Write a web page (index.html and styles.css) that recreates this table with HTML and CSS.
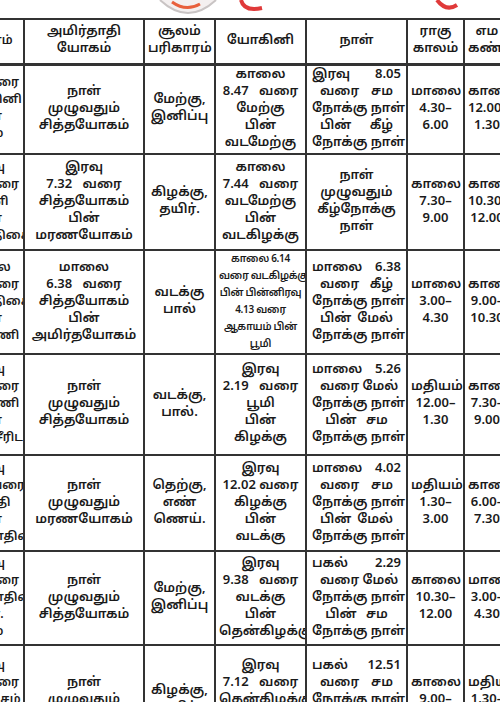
FILE: index.html
```html
<!DOCTYPE html>
<html lang="ta">
<head>
<meta charset="utf-8">
<title>பஞ்சாங்கம்</title>
<link rel="stylesheet" href="styles.css">
</head>
<body>
<div class="page">
  <svg class="deco" width="500" height="18" viewBox="0 0 500 18">
    <path d="M160 0 Q 188 26 216 0" fill="#f4f0f0" stroke="#c9c4c4" stroke-width="2"/>
    <path d="M172 2 Q 186 12 200 4" fill="none" stroke="#e8603c" stroke-width="3"/>
    <path d="M241 0 Q 244 12 262 8" fill="none" stroke="#e03a3a" stroke-width="4"/>
    <path d="M437 0 Q 446 12 457 5" fill="none" stroke="#e03a3a" stroke-width="4"/>
  </svg>
  <table class="tbl">
    <colgroup>
      <col class="w0"><col class="w1"><col class="w2"><col class="w3"><col class="w4"><col class="w5"><col class="w6">
    </colgroup>
    <thead>
      <tr class="rh">
        <th class="lc">கரணம்</th>
        <th><span class="l">அமிர்தாதி</span><span class="l">யோகம்</span></th>
        <th><span class="l">சூலம்</span><span class="l">பரிகாரம்</span></th>
        <th>யோகினி</th>
        <th>நாள்</th>
        <th><span class="l">ராகு</span><span class="l">காலம்</span></th>
        <th><span class="l">எம</span><span class="l">கண்டம்</span></th>
      </tr>
    </thead>
    <tbody>
      <tr class="r1">
        <td class="lc"><span class="l">8.05 வரை</span><span class="l">அஸ்வினி</span><span class="l">பின்</span><span class="l">பூசம்</span></td>
        <td class="loose"><span class="l">நாள்</span><span class="l">முழுவதும்</span><span class="l">சித்தயோகம்</span></td>
        <td class="sul"><span class="l">மேற்கு,</span><span class="l">இனிப்பு</span></td>
        <td><span class="l">காலை</span><span class="l sp">8.47 வரை</span><span class="l">மேற்கு</span><span class="l">பின்</span><span class="l">வடமேற்கு</span></td>
        <td class="j"><span class="l">இரவு 8.05</span><span class="l n">வரை சம</span><span class="l">நோக்கு நாள்</span><span class="l n">பின் கீழ்</span><span class="l">நோக்கு நாள்</span></td>
        <td><span class="l">மாலை</span><span class="l">4.30–</span><span class="l">6.00</span></td>
        <td><span class="l">காலை</span><span class="l">12.00–</span><span class="l">1.30</span></td>
      </tr>
      <tr class="r2">
        <td class="lc"><span class="l">இரவு</span><span class="l">7.32 வரை</span><span class="l">பரணி</span><span class="l">பின்</span><span class="l">கார்த்திகை</span></td>
        <td><span class="l">இரவு</span><span class="l sp">7.32 வரை</span><span class="l">சித்தயோகம்</span><span class="l">பின்</span><span class="l">மரணயோகம்</span></td>
        <td class="sul"><span class="l">கிழக்கு,</span><span class="l">தயிர்.</span></td>
        <td><span class="l">காலை</span><span class="l sp">7.44 வரை</span><span class="l">வடமேற்கு</span><span class="l">பின்</span><span class="l">வடகிழக்கு</span></td>
        <td><span class="l">நாள்</span><span class="l">முழுவதும்</span><span class="l">கீழ்நோக்கு</span><span class="l">நாள்</span></td>
        <td><span class="l">காலை</span><span class="l">7.30–</span><span class="l">9.00</span></td>
        <td><span class="l">காலை</span><span class="l">10.30–</span><span class="l">12.00</span></td>
      </tr>
      <tr class="r3">
        <td class="lc"><span class="l">மாலை</span><span class="l">6.38 வரை</span><span class="l">கார்த்திகை</span><span class="l">பின்</span><span class="l">ரோகிணி</span></td>
        <td><span class="l">மாலை</span><span class="l sp">6.38 வரை</span><span class="l">சித்தயோகம்</span><span class="l">பின்</span><span class="l">அமிர்தயோகம்</span></td>
        <td class="sul"><span class="l">வடக்கு</span><span class="l">பால்</span></td>
        <td class="small"><span class="l">காலை 6.14</span><span class="l">வரை வடகிழக்கு</span><span class="l">பின் பின்னிரவு</span><span class="l">4.13 வரை</span><span class="l">ஆகாயம் பின்</span><span class="l">பூமி</span></td>
        <td class="j"><span class="l">மாலை 6.38</span><span class="l n">வரை கீழ்</span><span class="l">நோக்கு நாள்</span><span class="l n">பின் மேல்</span><span class="l">நோக்கு நாள்</span></td>
        <td><span class="l">மாலை</span><span class="l">3.00–</span><span class="l">4.30</span></td>
        <td><span class="l">காலை</span><span class="l">9.00–</span><span class="l">10.30</span></td>
      </tr>
      <tr class="r4">
        <td class="lc"><span class="l">இரவு</span><span class="l">2.19 வரை</span><span class="l">ரோகிணி</span><span class="l">பின்</span><span class="l">மிருகசீரிடம்</span></td>
        <td class="loose"><span class="l">நாள்</span><span class="l">முழுவதும்</span><span class="l">சித்தயோகம்</span></td>
        <td class="sul"><span class="l">வடக்கு,</span><span class="l">பால்.</span></td>
        <td><span class="l">இரவு</span><span class="l sp">2.19 வரை</span><span class="l">பூமி</span><span class="l">பின்</span><span class="l">கிழக்கு</span></td>
        <td class="j"><span class="l">மாலை 5.26</span><span class="l n">வரை மேல்</span><span class="l">நோக்கு நாள்</span><span class="l c">பின் சம</span><span class="l">நோக்கு நாள்</span></td>
        <td><span class="l">மதியம்</span><span class="l">12.00–</span><span class="l">1.30</span></td>
        <td><span class="l">காலை</span><span class="l">7.30–</span><span class="l">9.00</span></td>
      </tr>
      <tr class="r5">
        <td class="lc"><span class="l">இரவு</span><span class="l">12.02 வரை</span><span class="l">சுவாதி</span><span class="l">பின்</span><span class="l">திருவாதிரை</span></td>
        <td class="loose"><span class="l">நாள்</span><span class="l">முழுவதும்</span><span class="l">மரணயோகம்</span></td>
        <td class="sul"><span class="l">தெற்கு,</span><span class="l">எண்</span><span class="l">ணெய்.</span></td>
        <td><span class="l">இரவு</span><span class="l">12.02 வரை</span><span class="l">கிழக்கு</span><span class="l">பின்</span><span class="l">வடக்கு</span></td>
        <td class="j"><span class="l">மாலை 4.02</span><span class="l n">வரை சம</span><span class="l">நோக்கு நாள்</span><span class="l n">பின் மேல்</span><span class="l">நோக்கு நாள்</span></td>
        <td><span class="l">மதியம்</span><span class="l">1.30–</span><span class="l">3.00</span></td>
        <td><span class="l">காலை</span><span class="l">6.00–</span><span class="l">7.30</span></td>
      </tr>
      <tr class="r6">
        <td class="lc"><span class="l">இரவு</span><span class="l">9.38 வரை</span><span class="l">திருவாதிரை</span><span class="l">பின்.</span><span class="l">பூசம்</span></td>
        <td class="loose"><span class="l">நாள்</span><span class="l">முழுவதும்</span><span class="l">சித்தயோகம்</span></td>
        <td class="sul"><span class="l">மேற்கு,</span><span class="l">இனிப்பு</span></td>
        <td><span class="l">இரவு</span><span class="l sp">9.38 வரை</span><span class="l">வடக்கு</span><span class="l">பின்</span><span class="l">தென்கிழக்கு</span></td>
        <td class="j"><span class="l">பகல் 2.29</span><span class="l n">வரை மேல்</span><span class="l">நோக்கு நாள்</span><span class="l c">பின் சம</span><span class="l">நோக்கு நாள்</span></td>
        <td><span class="l">காலை</span><span class="l">10.30–</span><span class="l">12.00</span></td>
        <td><span class="l">மாலை</span><span class="l">3.00–</span><span class="l">4.30</span></td>
      </tr>
      <tr class="r7">
        <td class="lc"><span class="l">இரவு</span><span class="l">7.12 வரை</span><span class="l">புனர்பூசம்</span><span class="l">பின்</span><span class="l">பூசம்</span></td>
        <td class="loose"><span class="l">நாள்</span><span class="l">முழுவதும்</span><span class="l">சித்தயோகம்</span></td>
        <td class="sul"><span class="l">கிழக்கு,</span><span class="l">தயிர்.</span></td>
        <td><span class="l">இரவு</span><span class="l sp">7.12 வரை</span><span class="l">தென்கிழக்கு</span><span class="l">பின்</span><span class="l">தெற்கு</span></td>
        <td class="j"><span class="l">பகல் 12.51</span><span class="l n">வரை சம</span><span class="l">நோக்கு நாள்</span><span class="l n">பின் மேல்</span><span class="l">நோக்கு நாள்</span></td>
        <td><span class="l">காலை</span><span class="l">9.00–</span><span class="l">10.30</span></td>
        <td><span class="l">மதியம்</span><span class="l">1.30–</span><span class="l">3.00</span></td>
      </tr>
    </tbody>
  </table>
</div>
</body>
</html>
```
FILE: styles.css
```css
html, body {
  margin: 0;
  padding: 0;
  background: #ffffff;
}
.page {
  width: 500px;
  height: 702px;
  overflow: hidden;
  background: #ffffff;
}
.deco {
  display: block;
  width: 500px;
  height: 18px;
}
.tbl {
  margin-left: -50px;
  border-collapse: collapse;
  table-layout: fixed;
  width: 559px;
  font-family: "Noto Sans Tamil", "Noto Sans", "Lohit Tamil", sans-serif;
  font-size: 13px;
  color: #1a1a1a;
}
.w0 { width: 73px; }
.w1 { width: 120px; }
.w2 { width: 71px; }
.w3 { width: 91px; }
.w4 { width: 101px; }
.w5 { width: 57px; }
.w6 { width: 46px; }
.tbl th,
.tbl td {
  border: 2px solid #333333;
  padding: 0 3px;
  vertical-align: middle;
  text-align: center;
  line-height: 17px;
  font-weight: 600;
  overflow: hidden;
  white-space: nowrap;
}
.tbl th {
  border-bottom-width: 3px;
}
.l {
  display: block;
}
.lc {
  font-size: 12px;
}
.rh { height: 45px; }
.r1 { height: 90px; }
.r2 { height: 96px; }
.r3 { height: 96px; }
.r4 { height: 101px; }
.r5 { height: 96px; }
.r6 { height: 94px; }
.r7 { height: 110px; }
.loose { line-height: 23px; }
.sul { line-height: 21px; }
.sp { word-spacing: 7px; }
.small {
  font-size: 10px;
  line-height: 14px;
  letter-spacing: -0.3px;
}
.j .l {
  text-align: justify;
  text-align-last: justify;
  padding: 0 2px;
}
.j .l.n {
  padding: 0 10px;
}
.j .l.c {
  text-align: center;
  text-align-last: center;
  word-spacing: 6px;
}
```
